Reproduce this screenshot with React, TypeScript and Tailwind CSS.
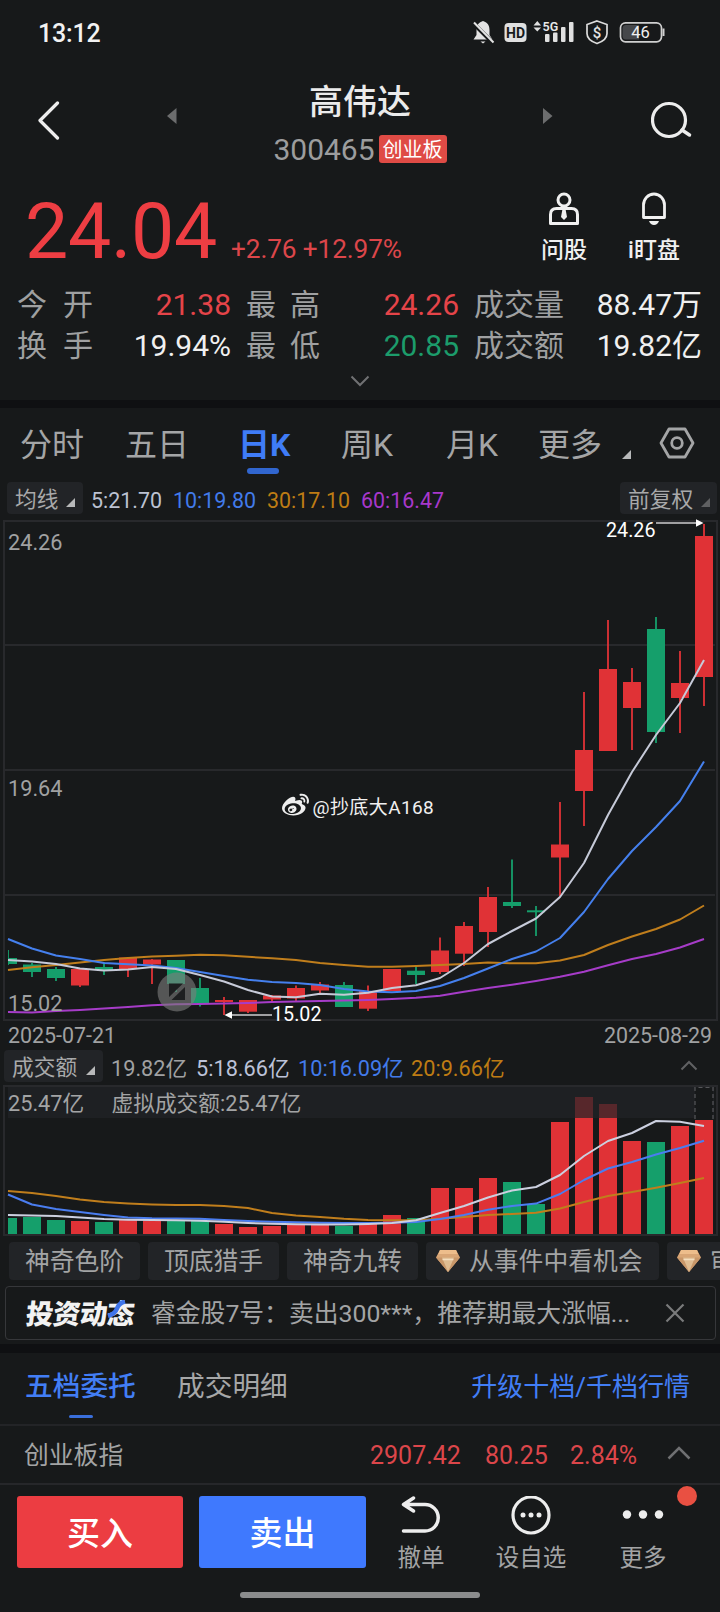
import type { ReactNode } from 'react'
import { FaWeibo } from 'react-icons/fa'

const RED = '#e03236'
const GREEN = '#159f6b'

// [open/close top, open/close bottom, high, low, volume top, rising]
type Day = [number, number, number, number, number, boolean]

const days: Day[] = [
  [958, 964, 950, 965, 1218, false],
  [964.5, 972, 963, 977, 1217, false],
  [969, 978, 967, 981, 1220, false],
  [969, 985.5, 969, 987, 1221, true],
  [967, 970, 962, 975, 1222, false],
  [957.5, 969, 957, 977, 1220, true],
  [959.5, 964.5, 959, 984, 1220.5, true],
  [960, 984, 960, 992, 1220.5, false],
  [988, 1003, 978, 1006.5, 1221, false],
  [1000, 1002, 997, 1015, 1224, true],
  [1000, 1011.7, 1000, 1013, 1227, true],
  [995.5, 999.5, 995, 1003, 1226, true],
  [988, 998.5, 985.5, 1001, 1225, true],
  [984.5, 990.5, 982, 993, 1225, true],
  [985, 1007, 982, 1007, 1226, false],
  [991, 1008.7, 985.5, 1011, 1224, true],
  [969, 991, 969, 991, 1215, true],
  [970.7, 975, 966, 984, 1218, false],
  [950.5, 972, 937.5, 974, 1188, true],
  [926, 953.7, 922, 966, 1188, true],
  [897, 932, 887, 947, 1178, true],
  [902, 906, 859.5, 908, 1182, false],
  [910.3, 912.3, 906, 936, 1204, false],
  [844.5, 857.5, 802, 896, 1122, true],
  [750, 791, 692, 826, 1097, true],
  [669, 751, 620, 751, 1104, true],
  [682, 708, 668, 750, 1141, true],
  [629, 732, 617, 743, 1142, false],
  [683, 698, 651, 733, 1126, true],
  [536, 677, 524, 706, 1120, true],
]

const ma5 = [960, 961.5, 964, 968.5, 970.5, 969.5, 967, 969, 975, 981.5, 990, 996.5, 997.3, 993.7, 994.8, 992.7, 988, 985.3, 978, 963, 944, 931, 918.5, 897, 863, 815, 772, 735, 703, 660]
const ma10 = [939, 948.5, 955.5, 959, 963, 964.3, 965.5, 968, 972, 976, 979.7, 982, 983, 985, 989, 991.5, 992.3, 991, 986, 978, 968.5, 959, 951.5, 938, 912, 879, 851, 827, 801, 761.5]
const ma30 = [970, 967.3, 965, 962.5, 960, 958, 956.5, 955.7, 954.7, 955.3, 956.8, 958.2, 960, 963, 965, 966.7, 966.8, 966, 965, 964, 962.6, 963.3, 963.3, 960.5, 955, 945, 936.5, 929, 919.5, 905.5]
const ma60 = [1012, 1012.5, 1011, 1010, 1008.5, 1007, 1005.2, 1004.3, 1004, 1003.6, 1003, 1002, 1001.4, 1001, 1000.6, 1000, 999, 997.7, 995.7, 991.8, 988, 984.7, 981, 976.8, 971.8, 965.3, 959, 954, 947.5, 939]

const vol5 = [1215, 1215.5, 1216, 1217.5, 1219, 1219.7, 1220, 1220.3, 1220.7, 1221.8, 1223, 1223.8, 1224.2, 1224.5, 1224.5, 1224, 1223, 1220.3, 1213, 1206, 1197.5, 1190.5, 1187, 1175, 1156, 1141, 1133, 1121, 1121.7, 1126]
const vol10 = [1194.5, 1204.5, 1209, 1212, 1215, 1217.5, 1218.3, 1218.4, 1218.8, 1220, 1221, 1221.7, 1222.3, 1222.7, 1223, 1223, 1222.7, 1222, 1219, 1215, 1209.8, 1206, 1203.6, 1194, 1180, 1168.5, 1162, 1154.5, 1148, 1140.7]
const vol20 = [1191, 1193, 1196, 1199.5, 1202, 1203.5, 1204.5, 1205, 1205, 1206, 1208, 1213, 1215.5, 1217, 1218.8, 1220, 1220.3, 1220.3, 1218.7, 1217, 1215, 1214, 1212.7, 1208.5, 1202, 1196, 1192, 1187.7, 1183, 1178]

const xOf = (i: number) => 8 + i * 24

function Line({ ys, color }: { ys: number[]; color: string }) {
  return <polyline points={ys.map((y, i) => `${xOf(i)},${y}`).join(' ')} fill="none" stroke={color} strokeWidth="2" strokeLinejoin="round" />
}

function Corner({ className = 'text-[#b8b9ba]' }: { className?: string }) {
  return (
    <svg width="9" height="9" viewBox="0 0 9 9" className={className}>
      <path d="M9 0v9H0z" fill="currentColor" />
    </svg>
  )
}

function StatusBar() {
  return (
    <div className="h-16 shrink-0 flex items-center pl-[38px] text-[#f2f2f2]">
      <span className="text-[25px] leading-none font-medium tracking-[-0.2px] mt-0.5">13:12</span>
      <svg width="200" height="28" viewBox="470 18 200 28" className="ml-auto mr-[50px]">
        {/* muted bell */}
        <path d="M483 21c-5 1.500-6.500 5-6.500 9v5l-3 4.500h19l-3-4.500v-5c0-4-1.500-7.500-6.500-9z" fill="#e3e3e3" />
        <path d="M480.500 41.500h5l-2.500 2z" fill="#e3e3e3" />
        <path d="M473 23l20 20" stroke="#17191a" strokeWidth="4" />
        <path d="M474 22.500l19.500 20" stroke="#e3e3e3" strokeWidth="2" />
        {/* HD */}
        <rect x="504.500" y="23" width="22" height="19" rx="4" fill="#e0e0e0" />
        <text x="515.500" y="37.800" textAnchor="middle" fontSize="14" fontWeight="700" fill="#17191a">HD</text>
        {/* 5G signal */}
        <path d="M533.500 25.500l3.800-4.500 3.800 4.500zM533.500 27.500l3.800 4 3.800-4z" fill="#e0e0e0" />
        <text x="542.500" y="31" fontSize="12.500" fontWeight="600" fill="#e8e8e8">5G</text>
        <g fill="#e0e0e0">
          <rect x="545" y="34" width="4.500" height="8" rx="1" />
          <rect x="553" y="32.500" width="4.500" height="9.500" rx="1" />
          <rect x="561" y="27" width="4.500" height="15" rx="1" />
          <rect x="569" y="22" width="4.500" height="20" rx="1" />
        </g>
        {/* shield */}
        <path d="M597 21l10 3.500v9c0 5-4 8-10 10-6-2-10-5-10-10v-9z" fill="none" stroke="#dcdcdc" strokeWidth="1.700" />
        <text x="597" y="37.500" textAnchor="middle" fontSize="15" fontWeight="500" fill="#e3e3e3">$</text>
        {/* battery */}
        <rect x="620.500" y="22.800" width="41" height="19" rx="5" fill="none" stroke="#d0d0d0" strokeWidth="1.700" />
        <path d="M626 25h13v14.500h-13q-3.500 0-3.500-3.500v-7.500q0-3.500 3.500-3.500z" fill="#45474a" />
        <rect x="662.500" y="28.500" width="2" height="7.500" fill="#d0d0d0" />
        <text x="640.500" y="38" textAnchor="middle" fontSize="16.500" fill="#f0f0f0">46</text>
      </svg>
    </div>
  )
}

function Header() {
  return (
    <header className="h-[116px] shrink-0 flex items-start pl-[37px]">
      <svg width="24" height="40" viewBox="0 0 24 40" fill="none" className="mt-9">
        <path d="M20.500 3L3 20.500 20.500 38" stroke="#ededed" strokeWidth="3.200" strokeLinecap="round" strokeLinejoin="round" />
      </svg>
      <svg width="10" height="16" viewBox="0 0 10 16" className="mt-11 ml-[106px]">
        <path d="M9.500 0v16L0 8z" fill="#6c6d6e" />
      </svg>
      <div className="flex flex-col items-center w-[366px]">
        <h1 className="text-[34px] leading-[40px] font-medium text-[#ebebeb] mt-[18px]">高伟达</h1>
        <div className="flex items-center mt-2 gap-1">
          <span className="text-[30px] leading-[38px] text-[#9c9d9e] mt-px">300465</span>
          <span className="h-7 w-[68px] flex items-center justify-center rounded-[3px] bg-[#df4b45] text-white text-[20px] leading-none -mt-0.5"><span className="mt-0.5">创业板</span></span>
        </div>
      </div>
      <svg width="10" height="16" viewBox="0 0 10 16" className="mt-11">
        <path d="M0 0v16l9.500-8z" fill="#6c6d6e" />
      </svg>
      <svg width="42" height="40" viewBox="0 0 42 40" fill="none" className="mt-9 ml-[98px]">
        <circle cx="18" cy="20" r="16.500" stroke="#ededed" strokeWidth="3.200" />
        <path d="M31 30l7.500 5" stroke="#ededed" strokeWidth="3.500" strokeLinecap="round" />
      </svg>
    </header>
  )
}

function Quote() {
  const label = 'text-[#9fa0a1]'
  return (
    <section className="h-[220px] shrink-0 flex flex-col">
      <div className="h-24 flex">
        <div className="text-[77px] leading-[104px] text-[#ee3e43] pl-[25px] w-[231px] shrink-0 tracking-[-0.3px]">24.04</div>
        <div className="text-[26.200px] leading-none text-[#dc464a] mt-[56px] flex-1 whitespace-nowrap tracking-[-0.1px]">+2.76 +12.97%</div>
        <div className="flex flex-col items-center w-[90px]">
          <svg width="34" height="34" viewBox="0 0 34 34" fill="none" stroke="#f0f0f0" strokeWidth="3" className="mt-3">
            <circle cx="17" cy="8" r="6" />
            <path d="M3.500 31.500v-9q0-6 6-6h15q6 0 6 6v9z" strokeLinejoin="round" />
            <path d="M15.500 17h3l1.500 8-3 3-3-3z" fill="#f0f0f0" stroke="none" />
          </svg>
          <span className="text-[23px] leading-[28px] font-medium text-[#f0f0f0] mt-[11px]">问股</span>
        </div>
        <div className="flex flex-col items-center w-[90px] mr-[21px]">
          <svg width="30" height="34" viewBox="0 0 30 34" fill="none" stroke="#f0f0f0" strokeWidth="2.800" className="mt-3">
            <path d="M4.500 25.500V13a10.500 11 0 0 1 21 0v12.500z" strokeLinejoin="round" />
            <path d="M10 29h10q-1.500 4-5 4t-5-4z" fill="#f0f0f0" stroke="none" />
          </svg>
          <span className="text-[23px] leading-[28px] font-medium text-[#f0f0f0] mt-[11px]">i盯盘</span>
        </div>
      </div>
      <div className="grid grid-cols-[76px_138px_76px_152px_98px_145px] pl-[17px] mt-2 text-[30px] leading-[41px] text-right text-[#f0f0f0]">
        <div className={`${label} flex justify-between`}><span>今</span><span>开</span></div>
        <div className="text-[#e54449]">21.38</div>
        <div className={`${label} flex justify-between pl-[15px] -mr-[13px]`}><span>最</span><span>高</span></div>
        <div className="text-[#e54449]">24.26</div>
        <div className={`${label} -mr-[7px]`}>成交量</div>
        <div>88.47万</div>
        <div className={`${label} flex justify-between`}><span>换</span><span>手</span></div>
        <div>19.94%</div>
        <div className={`${label} flex justify-between pl-[15px] -mr-[13px]`}><span>最</span><span>低</span></div>
        <div className="text-[#1c9c6b]">20.85</div>
        <div className={`${label} -mr-[7px]`}>成交额</div>
        <div>19.82亿</div>
      </div>
      <svg width="20" height="12" viewBox="0 0 20 12" fill="none" className="self-center mt-[9px]">
        <path d="M1.500 1.500L10 10l8.500-8.500" stroke="#707173" strokeWidth="2" />
      </svg>
    </section>
  )
}

function PeriodTabs() {
  return (
    <nav className="h-[70px] shrink-0 flex items-start pl-5 text-[32px] leading-[74px] text-[#a4a5a6] whitespace-nowrap">
      <span className="w-[105px]">分时</span>
      <span className="w-[113px]">五日</span>
      <span className="w-[103px] h-[70px] flex flex-col font-bold text-[#3f7cf6]">
        <span className="h-[60px]">日K</span>
        <span className="w-8 h-1.5 rounded-full bg-[#3166cf] ml-[9px]" />
      </span>
      <span className="w-[105px]">周K</span>
      <span className="w-[92px]">月K</span>
      <span className="w-[84px]">更多</span>
      <span className="flex mt-[42px]"><Corner /></span>
      <svg width="36" height="34" viewBox="0 0 36 34" fill="none" stroke="#a4a5a6" strokeWidth="2.800" className="mt-[18px] ml-[28px]">
        <path d="M10 3h16l8 14-8 14H10L2 17z" strokeLinejoin="round" />
        <circle cx="18" cy="17" r="5.300" />
      </svg>
    </nav>
  )
}

function ParamChip({ children, cornerClass, className }: { children: ReactNode; cornerClass?: string; className: string }) {
  return (
    <div className={`h-8 flex items-center justify-between rounded bg-[#222427] text-[21.700px] leading-none text-[#a8a9aa] whitespace-nowrap ${className}`}>
      <span className="mt-1">{children}</span>
      <span className="flex mt-2"><Corner className={cornerClass} /></span>
    </div>
  )
}

function PriceChart() {
  return (
    <svg width="720" height="504" viewBox="0 518 720 504" className="block shrink-0">
      <g stroke="#28292c" strokeWidth="2" fill="none">
        <path d="M4 521H717V1020H4z" />
        <path d="M4 645H715M4 770H715M4 895H715" />
      </g>
      <defs>
        <clipPath id="plot"><rect x="8" y="518" width="706" height="504" /></clipPath>
      </defs>
      <g clipPath="url(#plot)">
        {days.map(([top, bottom, high, low, , up], i) => (
          <g key={i} fill={up ? RED : GREEN}>
            <rect x={xOf(i) - 1} y={high} width="2" height={low - high} opacity="0.9" />
            <rect x={xOf(i) - 9} y={top} width="18" height={bottom - top} />
          </g>
        ))}
      </g>
      <Line ys={ma60} color="#a63cc8" />
      <Line ys={ma30} color="#c07e1c" />
      <Line ys={ma10} color="#4580ee" />
      <Line ys={ma5} color="#c6cad8" />

      <g fontSize="21.700" fill="#a0a1a2">
        <text x="8" y="550">24.26</text>
        <text x="8" y="796">19.64</text>
        <text x="8" y="1011">15.02</text>
      </g>
      <g fontSize="19.700" fill="#ffffff">
        <text x="606" y="537">24.26</text>
        <text x="272" y="1020.500">15.02</text>
      </g>
      {/* high / low pointers */}
      <path d="M656 523h41M232 1015h40" stroke="#a0a0a2" strokeWidth="1.800" />
      <path d="M703.500 523l-7.500-3.800v7.600zM224.500 1015l7.500-3.800v7.600z" fill="#ffffff" />

      {/* fullscreen toggle */}
      <circle cx="177" cy="992" r="19.500" fill="#7d7d7d" fillOpacity="0.620" />
      <path d="M169 983.500h14l-14 13.500zM185 987v13h-13.500z" fill="#1d1f20" />

      <FaWeibo x="282" y="792" size={27} color="#eeeeee" />
      <text x="312.500" y="813.500" fontSize="19" fill="#f0f0f0" letterSpacing="0.400">@抄底大A168</text>
    </svg>
  )
}

function VolumeChart() {
  return (
    <svg width="720" height="154" viewBox="0 1084 720 154" className="block shrink-0">
      <path d="M4 1086H717V1235H4z" stroke="#28292c" strokeWidth="2" fill="none" />
      <defs>
        <clipPath id="vol"><rect x="8" y="1086" width="706" height="148" /></clipPath>
      </defs>
      <g clipPath="url(#vol)">
        {days.map(([, , , , top, up], i) => (
          <rect key={i} x={xOf(i) - 9} y={top} width="18" height={1234 - top} fill={up ? RED : GREEN} />
        ))}
      </g>
      <rect x="8" y="1087" width="706" height="31" fill="#212327" fillOpacity="0.720" />
      <path d="M695 1119v-31.500h18v31.500" fill="#17191a" stroke="#56575a" strokeWidth="1.200" strokeDasharray="4 3" />
      <Line ys={vol20} color="#c07e1c" />
      <Line ys={vol10} color="#4a7df0" />
      <Line ys={vol5} color="#ccd0e0" />
      <g fontSize="21.700" fill="#a3a4a5">
        <text x="8" y="1110.500">25.47亿</text>
        <text x="111.500" y="1111">虚拟成交额:25.47亿</text>
      </g>
    </svg>
  )
}

function Gem() {
  return (
    <svg width="24" height="22" viewBox="0 0 24 22" className="-mt-[3px]">
      <path d="M4 0h16l4 7.500L12 22 0 7.500z" fill="#d9a676" />
      <path d="M4 0h16l1.500 4h-19z" fill="#edbd8b" />
      <path d="M0 7.500h24L12 22z" fill="#c99769" />
      <path d="M6 7.500h12L12 22z" fill="#e0bd92" />
      <path d="M6.500 9.500h11" stroke="#f4dfc0" strokeWidth="1.500" />
    </svg>
  )
}

function SignalChips() {
  const chip = 'h-[38px] shrink-0 flex items-center rounded bg-[#222427] pt-[3px]'
  return (
    <div className="h-12 shrink-0 flex gap-2 pl-[9px] pt-1 overflow-hidden text-[24.800px] leading-none text-[#a3a4a5] whitespace-nowrap">
      <span className={`${chip} justify-center w-[131px]`}>神奇色阶</span>
      <span className={`${chip} justify-center w-[131px]`}>顶底猎手</span>
      <span className={`${chip} justify-center w-[131px]`}>神奇九转</span>
      <span className={`${chip} w-[233px] gap-[9px] pl-2.5`}><Gem />从事件中看机会</span>
      <span className={`${chip} w-[160px] gap-[9px] pl-2.5`}><Gem />审</span>
    </div>
  )
}

function NewsBar() {
  return (
    <div className="h-[54px] shrink-0 mx-[5px] mb-1 mr-[4px] border border-[#36373a] rounded flex items-center pl-5 text-[#a3a4a5]">
      <div className="relative w-[112px] shrink-0 mt-[3px]">
        <span className="block text-[27.500px] leading-none font-black text-[#f2f2f2] -skew-x-6 tracking-[-0.5px] whitespace-nowrap">投资动态</span>
        <svg width="20" height="18" viewBox="0 0 20 18" className="absolute left-[81px] -top-px">
          <path d="M1 16q7-2 9-7.500T18 1.500" stroke="#3f74ea" strokeWidth="4.500" fill="none" />
        </svg>
      </div>
      <span className="ml-[13px] mt-[3px] text-[24.800px] leading-none whitespace-nowrap w-[500px]">睿金股7号：卖出300***，推荐期最大涨幅...</span>
      <svg width="20" height="20" viewBox="0 0 20 20" className="ml-[14px]">
        <path d="M1.500 1.500l17 17M18.500 1.500l-17 17" stroke="#7a7b7c" strokeWidth="2.200" />
      </svg>
    </div>
  )
}

function OrderTabs() {
  return (
    <div className="h-[73px] shrink-0 border-b-2 border-[#232427] flex items-start pl-[25px] pr-[30px] text-[27.700px] leading-[68px] text-[#a6a7a8]">
      <div className="w-[152px] h-[70px] flex flex-col text-[#427ef5] font-medium">
        <span className="h-[62px]">五档委托</span>
        <span className="w-6 h-[3px] rounded-full bg-[#3a6fdc] ml-[44px]" />
      </div>
      <span>成交明细</span>
      <span className="ml-auto text-[26px] text-[#427ef5]">升级十档/千档行情</span>
    </div>
  )
}

function IndexRow() {
  return (
    <div className="h-[59px] shrink-0 border-b-2 border-[#26272a] flex items-center pl-6 text-[25px] leading-none text-[#dc464a]">
      <span className="text-[#a3a4a5] flex-1 text-[24.800px] mt-[3px]">创业板指</span>
      <span className="w-[115px] mt-0.5">2907.42</span>
      <span className="w-[85px] mt-0.5">80.25</span>
      <span className="w-[97px] mt-0.5">2.84%</span>
      <svg width="24" height="14" viewBox="0 0 24 14" fill="none" className="mr-[29px] -mt-1">
        <path d="M1.500 12.500L12 2l10.500 10.500" stroke="#6f7072" strokeWidth="2.500" />
      </svg>
    </div>
  )
}

function ActionBar() {
  const item = 'flex flex-col items-center text-[23.500px] leading-[28px] text-[#a3a4a5]'
  return (
    <div className="h-[127px] shrink-0 flex flex-col">
      <div className="flex pt-[11px] pl-[17px] h-[107px]">
        <button className="w-[166px] h-[72px] rounded-[3px] bg-[#ec3d42] text-white text-[33px] leading-none font-medium pt-[3px]">买入</button>
        <button className="w-[167px] h-[72px] ml-4 rounded-[3px] bg-[#3f79fe] text-white text-[33px] leading-none font-medium pt-[3px]">卖出</button>
        <div className={`${item} w-[90px] ml-[10px]`}>
          <svg width="42" height="42" viewBox="0 0 42 42" fill="none" stroke="#ededed" strokeWidth="3.500" strokeLinecap="round" strokeLinejoin="round">
            <path d="M13.500 2L3.500 8.500l10 6.500M3.500 8.500H25a13 13 0 0 1 0 26.500H3.500" />
          </svg>
          <span className="mt-[6px]">撤单</span>
        </div>
        <div className={`${item} w-[120px] ml-[5px]`}>
          <svg width="42" height="42" viewBox="0 0 42 42">
            <circle cx="21" cy="18.500" r="18" fill="none" stroke="#ededed" strokeWidth="3.200" className="[transform:translateY(0.5px)]" />
            <g fill="#ededed">
              <circle cx="13" cy="19" r="2.500" />
              <circle cx="21" cy="19" r="2.500" />
              <circle cx="29" cy="19" r="2.500" />
            </g>
          </svg>
          <span className="mt-[6px]">设自选</span>
        </div>
        <div className={`${item} w-[90px] ml-[7px] relative`}>
          <svg width="42" height="42" viewBox="0 0 42 42" fill="#ededed">
            <circle cx="5" cy="18.500" r="4.200" />
            <circle cx="21" cy="18.500" r="4.200" />
            <circle cx="37" cy="18.500" r="4.200" />
          </svg>
          <span className="mt-[6px]">更多</span>
          <span className="absolute size-5 rounded-full bg-[#e95042] left-[79px] -top-2.5" />
        </div>
      </div>
      <div className="w-60 h-1.5 rounded-full bg-[#8b8c8d] self-center" />
    </div>
  )
}

export default function App() {
  return (
    <div className="w-[720px] h-[1612px] overflow-hidden bg-[#17191a] flex flex-col font-[Roboto,'Noto_Sans_CJK_SC',sans-serif]">
      <StatusBar />
      <Header />
      <Quote />
      <div className="h-2 shrink-0 bg-[#0f1012]" />
      <PeriodTabs />

      <div className="h-10 shrink-0 flex items-center text-[21.400px] leading-none whitespace-nowrap">
        <ParamChip className="ml-[7px] w-[76px] pl-2 pr-2">均线</ParamChip>
        <span className="text-[#bcc2d2] mt-[5px] ml-2 w-[82px]">5:21.70</span>
        <span className="text-[#427bea] mt-[5px] w-[94px]">10:19.80</span>
        <span className="text-[#be7c14] mt-[5px] w-[94px]">30:17.10</span>
        <span className="text-[#a838cc] mt-[5px]">60:16.47</span>
        <ParamChip className="ml-auto w-[97px] mr-[3px] pl-2 pr-[7px]" cornerClass="text-[#5f6062]">前复权</ParamChip>
      </div>

      <PriceChart />
      <div className="h-7 shrink-0 flex justify-between px-2 text-[21.400px] leading-[28px] text-[#a0a1a2]">
        <span>2025-07-21</span>
        <span>2025-08-29</span>
      </div>

      <div className="h-[34px] shrink-0 flex items-start text-[21.700px] leading-[38px] whitespace-nowrap">
        <ParamChip className="ml-1 w-[99px] pl-2 pr-2">成交额</ParamChip>
        <span className="text-[#a0a1a2] ml-2 w-[85px]">19.82亿</span>
        <span className="text-[#bcc2d8] w-[102px]">5:18.66亿</span>
        <span className="text-[#427bea] w-[113px]">10:16.09亿</span>
        <span className="text-[#be7c14]">20:9.66亿</span>
        <svg width="18" height="11" viewBox="0 0 18 11" fill="none" className="ml-auto mr-[22px] mt-[10px]">
          <path d="M1.500 9.500L9 2l7.500 7.500" stroke="#606163" strokeWidth="2" />
        </svg>
      </div>
      <VolumeChart />

      <SignalChips />
      <NewsBar />
      <div className="h-[9px] shrink-0 bg-[#0f1012]" />
      <OrderTabs />
      <IndexRow />
      <ActionBar />
    </div>
  )
}
